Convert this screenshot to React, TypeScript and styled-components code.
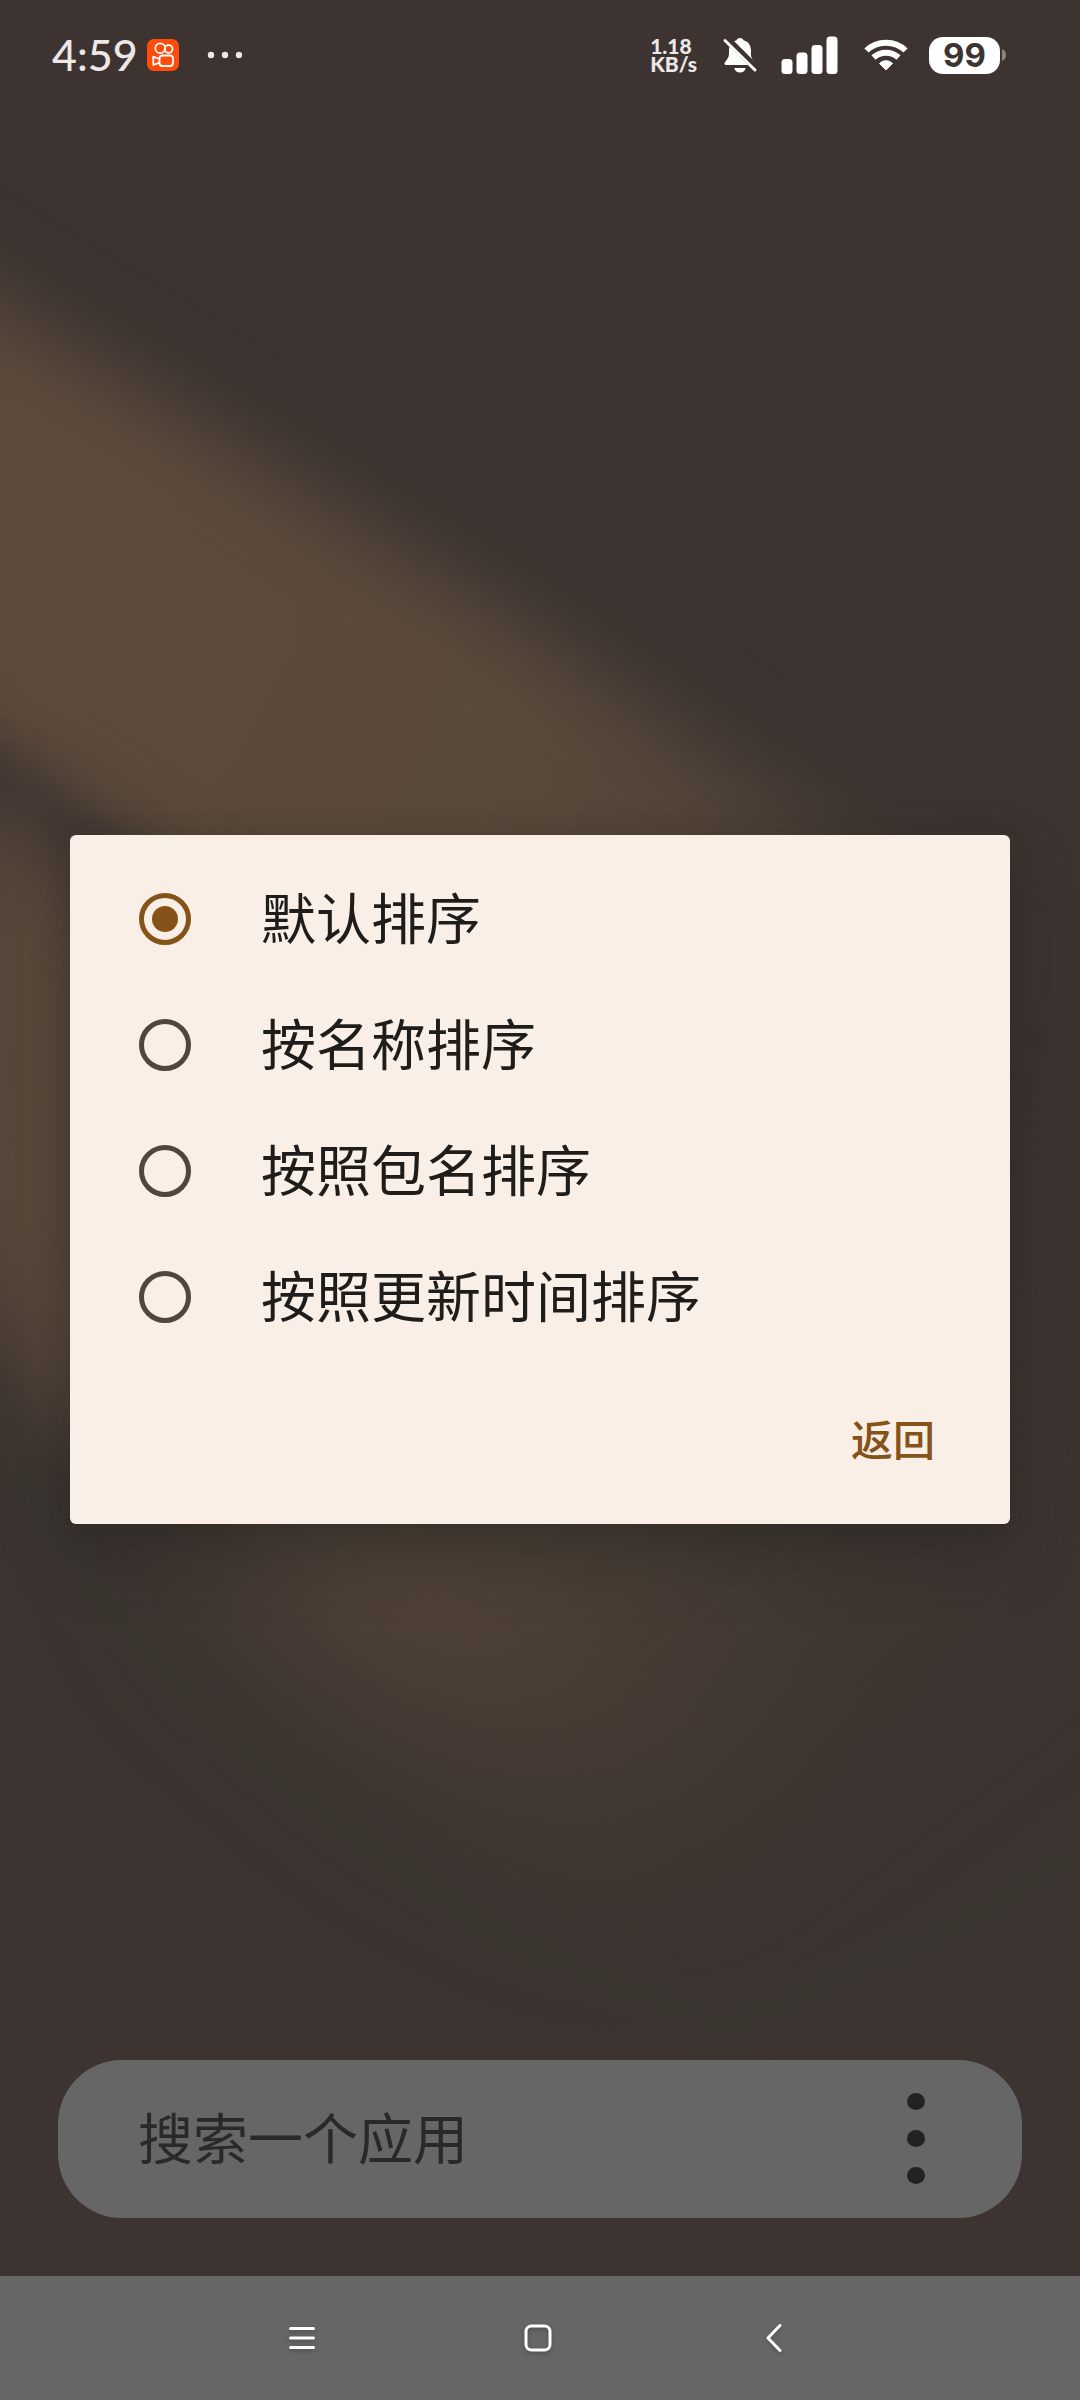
import React, { useState } from "react";
import styled, { createGlobalStyle } from "styled-components";

const GlobalStyle = createGlobalStyle`
  *, *::before, *::after { box-sizing: border-box; }
  body { margin: 0; background: #3d3431; }
  button, input { font: inherit; border: 0; background: none; padding: 0; margin: 0; }
  button { cursor: pointer; }
`;

const cjk = `"Noto Sans CJK SC", sans-serif`;

const Screen = styled.div`
  position: relative;
  display: flex;
  flex-direction: column;
  min-height: 100vh;
  overflow: hidden;
  background: #3d3431;
  font-family: ${cjk};
`;

const Wallpaper = styled.svg`
  position: absolute;
  inset: 0;
  width: 100%;
  height: 100%;
`;

const StatusBar = styled.header`
  position: relative;
  display: flex;
  align-items: flex-start;
  justify-content: space-between;
  height: 83px;
  padding: 27px 74px 0 52px;
  color: #ebe8e7;
`;

const StatusGroup = styled.div<{ $gap: number }>`
  display: flex;
  align-items: center;
  gap: ${(p) => p.$gap}px;
  height: 56px;

  svg {
    display: block;
    flex: none;
  }
`;

const Clock = styled.time`
  font: 500 43px/56px Lato, sans-serif;
`;

const Speed = styled.span`
  margin-right: 4px;
  white-space: pre-line;
  font: 900 21px/18px Lato, sans-serif;
`;

const Battery = styled.div`
  display: flex;
  align-items: center;
  gap: 2px;
`;

const BatteryLevel = styled.span`
  display: block;
  width: 71px;
  border-radius: 14px;
  background: #fff;
  color: #3d3431;
  text-align: center;
  font: 700 33px/37px Inter, sans-serif;
`;

const Main = styled.main`
  position: relative;
  flex: 1;
  display: flex;
  flex-direction: column;
  justify-content: flex-end;
  padding: 58px;
`;

const SearchBar = styled.form`
  display: flex;
  align-items: center;
  height: 158px;
  padding: 0 80px;
  border-radius: 64px;
  background: #666;
`;

const SearchInput = styled.input`
  flex: 1;
  min-width: 0;
  padding-bottom: 8px;
  color: #292929;
  font-size: 55px;
  line-height: 80px;
  outline: 0;

  &::placeholder {
    color: #292929;
    opacity: 1;
  }
`;

const MoreButton = styled.button`
  display: flex;
  flex-direction: column;
  align-items: center;
  justify-content: center;
  gap: 20px;
  width: 52px;
  height: 110px;
  padding-bottom: 2px;
`;

const Dot = styled.span`
  width: 18px;
  height: 17px;
  border-radius: 50%;
  background: #222;
`;

const Overlay = styled.div`
  position: absolute;
  inset: 0;
  display: flex;
  align-items: center;
  padding: 0 70px;
`;

const Dialog = styled.section`
  flex: 1;
  padding: 21px 0 27px;
  border-radius: 6px;
  background: #f9efe6;
  box-shadow: 0 32px 64px rgba(34, 34, 30, 0.42), 0 0 24px rgba(34, 34, 30, 0.15);
`;

const Options = styled.fieldset`
  margin: 0;
  padding: 0;
  border: 0;
`;

const Option = styled.label`
  display: flex;
  align-items: center;
  gap: 70px;
  height: 126px;
  padding: 0 69px;
  color: #1f1d1b;
  font-size: 55px;
  line-height: 80px;
  cursor: pointer;
`;

const OptionName = styled.span`
  padding-bottom: 8px;
`;

const Radio = styled.input`
  appearance: none;
  flex: none;
  display: grid;
  place-items: center;
  width: 52px;
  height: 52px;
  border: 5px solid #52463a;
  border-radius: 50%;

  &:checked {
    border-color: #855318;
  }

  &:checked::before {
    content: "";
    width: 26px;
    height: 26px;
    border-radius: 50%;
    background: #855318;
  }
`;

const Actions = styled.div`
  display: flex;
  justify-content: flex-end;
  padding: 27px 42px 0;
`;

const TextButton = styled.button`
  height: 110px;
  padding: 0 33px 8px;
  color: #855318;
  font-size: 42px;
  font-weight: 500;
  line-height: 60px;
`;

const NavBar = styled.nav`
  position: relative;
  display: flex;
  justify-content: center;
  gap: 136px;
  height: 124px;
  padding-right: 4px;
  background: #666;
`;

const NavButton = styled.button`
  display: grid;
  place-items: center;
  width: 100px;

  svg {
    display: block;
    filter: drop-shadow(0 2px 2px rgba(0, 0, 0, 0.25));
  }
`;

const options = ["默认排序", "按名称排序", "按照包名排序", "按照更新时间排序"];

function Background() {
  return (
    <Wallpaper viewBox="0 0 1080 2400" preserveAspectRatio="none" aria-hidden="true">
      <defs>
        <filter id="soft" x="-30%" y="-30%" width="160%" height="160%" colorInterpolationFilters="sRGB">
          <feGaussianBlur stdDeviation="42" />
        </filter>
        <filter id="softer" x="-40%" y="-40%" width="180%" height="180%" colorInterpolationFilters="sRGB">
          <feGaussianBlur stdDeviation="80" />
        </filter>
        <filter id="line" x="-30%" y="-30%" width="160%" height="160%" colorInterpolationFilters="sRGB">
          <feGaussianBlur stdDeviation="18" />
        </filter>
        <linearGradient id="beam" gradientUnits="userSpaceOnUse" x1="100" y1="500" x2="950" y2="950">
          <stop offset="0" stopColor="#5d4b3c" />
          <stop offset="0.5" stopColor="#5a4a3b" />
          <stop offset="1" stopColor="#483d35" />
        </linearGradient>
        <radialGradient id="pool" gradientUnits="userSpaceOnUse" cx="400" cy="1540" r="480">
          <stop offset="0" stopColor="#56463a" />
          <stop offset="0.5" stopColor="#483d34" />
          <stop offset="1" stopColor="#3f3632" />
        </radialGradient>
      </defs>
      <polygon points="100,1200 1000,1200 1040,1560 640,1860 440,1760 230,1580" fill="url(#pool)" filter="url(#softer)" />
      <polygon points="-80,254 0,310 240,454 482,604 760,786 960,915 900,1300 300,980 110,838 -80,706" fill="url(#beam)" filter="url(#soft)" />
      <polygon points="-50,800 40,840 220,1000 220,1400 60,1440 0,1320 -50,1250" fill="#5a493b" filter="url(#soft)" />
      <path d="M-60 735 L20 785 L160 890" fill="none" stroke="#3b3430" strokeWidth="32" opacity="0.7" filter="url(#line)" />
      <path d="M-40 198 L207 342 L482 503 L758 690 L964 815 L1100 880" fill="none" stroke="#3a3731" strokeWidth="24" opacity="0.8" filter="url(#line)" />
      <path d="M-40 1390 L103 1605 L296 1793 L510 1945 L723 2025 L950 1930 L1120 1830" fill="none" stroke="#3a3731" strokeWidth="32" opacity="0.8" filter="url(#line)" />
    </Wallpaper>
  );
}

export default function App() {
  const [selected, setSelected] = useState(0);
  return (
    <>
      <GlobalStyle />
      <Screen>
        <Background />
        <StatusBar>
          <StatusGroup $gap={9}>
            <Clock>4:59</Clock>
            <svg width="32" height="32" viewBox="0 0 32 32" fill="none" stroke="#fff" strokeWidth="1.8" strokeLinejoin="round">
              <rect width="32" height="32" rx="7" fill="#ff4b0b" stroke="none" />
              <circle cx="13.2" cy="9.2" r="4.9" />
              <circle cx="21.6" cy="10" r="3.9" />
              <rect x="12.5" y="16.5" width="13.5" height="10.5" rx="3" />
              <path d="M12.5 20 L6.3 17.6 V26 L12.5 23.6" />
            </svg>
            <svg width="54" height="8" viewBox="0 0 54 8" fill="#ebe8e7">
              <circle cx="23" cy="4" r="3.2" />
              <circle cx="37" cy="4" r="3.2" />
              <circle cx="51" cy="4" r="3.2" />
            </svg>
          </StatusGroup>
          <StatusGroup $gap={21}>
            <Speed>{"1.18\nKB/s"}</Speed>
            <svg width="38" height="38" viewBox="0 0 38 38" fill="#fff">
              <path d="M18 2 C20 2 21 3 21.500 4.200 C26.500 5.600 29 9.500 29 15 V19 C29 22.500 32.500 25.500 33 29 H4 C2.500 29 2 27.500 3 26.200 L5.800 22.200 C7 20.300 7 18.500 7 15 C7 9.500 9.500 5.600 14.500 4.200 C15 3 16 2 18 2 Z" />
              <path d="M12.300 32 H23.700 C23 35 21 36.500 18 36.500 C15 36.500 13 35 12.300 32 Z" />
              <path d="M3.500 1.500 L36 34" stroke="#3d3431" strokeWidth="7" fill="none" />
              <path d="M3 4.500 L33 34" stroke="#fff" strokeWidth="3" strokeLinecap="round" fill="none" />
            </svg>
            <svg width="62" height="38" viewBox="0 0 62 38" fill="#fff">
              <rect x="0.500" y="23" width="11" height="15" rx="3.500" />
              <rect x="15.500" y="16.500" width="11" height="21.500" rx="3.500" />
              <rect x="30.500" y="9" width="11" height="29" rx="3.500" />
              <rect x="45.500" y="0.500" width="11" height="37.500" rx="3.500" />
            </svg>
            <svg width="44" height="32" viewBox="0 0 44 32" fill="none" stroke="#fff" strokeWidth="6">
              <path d="M2.500 11.500 C13 1 31 1 41.500 11.500" />
              <path d="M9.500 18.500 C16.500 12 27.500 12 34.500 18.500" />
              <path d="M22 31 L15.500 24.500 C19 20.800 25 20.800 28.500 24.500 Z" fill="#fff" strokeWidth="1" strokeLinejoin="round" />
            </svg>
            <Battery>
              <BatteryLevel>99</BatteryLevel>
              <svg width="4" height="12" viewBox="0 0 4 12">
                <path d="M0 0 C5.300 1.500 5.300 10.500 0 12 Z" fill="#8b8583" />
              </svg>
            </Battery>
          </StatusGroup>
        </StatusBar>

        <Main>
          <SearchBar onSubmit={(e) => e.preventDefault()}>
            <SearchInput type="text" placeholder="搜索一个应用" aria-label="搜索一个应用" />
            <MoreButton type="button" aria-label="更多">
              <Dot />
              <Dot />
              <Dot />
            </MoreButton>
          </SearchBar>
          <Overlay>
            <Dialog role="dialog" aria-modal="true" aria-label="排序">
              <Options>
                {options.map((name, i) => (
                  <Option key={name} htmlFor={`sort-${i}`}>
                    <Radio
                      type="radio"
                      name="sort"
                      id={`sort-${i}`}
                      checked={selected === i}
                      onChange={() => setSelected(i)}
                    />
                    <OptionName>{name}</OptionName>
                  </Option>
                ))}
              </Options>
              <Actions>
                <TextButton type="button">返回</TextButton>
              </Actions>
            </Dialog>
          </Overlay>
        </Main>

        <NavBar>
          <NavButton type="button" aria-label="菜单">
            <svg width="28" height="28" viewBox="0 0 28 28" stroke="#fff" strokeWidth="3" strokeLinecap="round">
              <path d="M2.500 4.500 H25.500 M2.500 14 H25.500 M2.500 23.500 H25.500" />
            </svg>
          </NavButton>
          <NavButton type="button" aria-label="主页">
            <svg width="28" height="28" viewBox="0 0 28 28" fill="none" stroke="#fff" strokeWidth="3">
              <rect x="2" y="2" width="24" height="24" rx="5.500" />
            </svg>
          </NavButton>
          <NavButton type="button" aria-label="后退">
            <svg width="28" height="28" viewBox="0 0 28 28" fill="none" stroke="#fff" strokeWidth="3" strokeLinecap="round" strokeLinejoin="round">
              <path d="M20 1.500 L8 14 L20 26.500" />
            </svg>
          </NavButton>
        </NavBar>
      </Screen>
    </>
  );
}
